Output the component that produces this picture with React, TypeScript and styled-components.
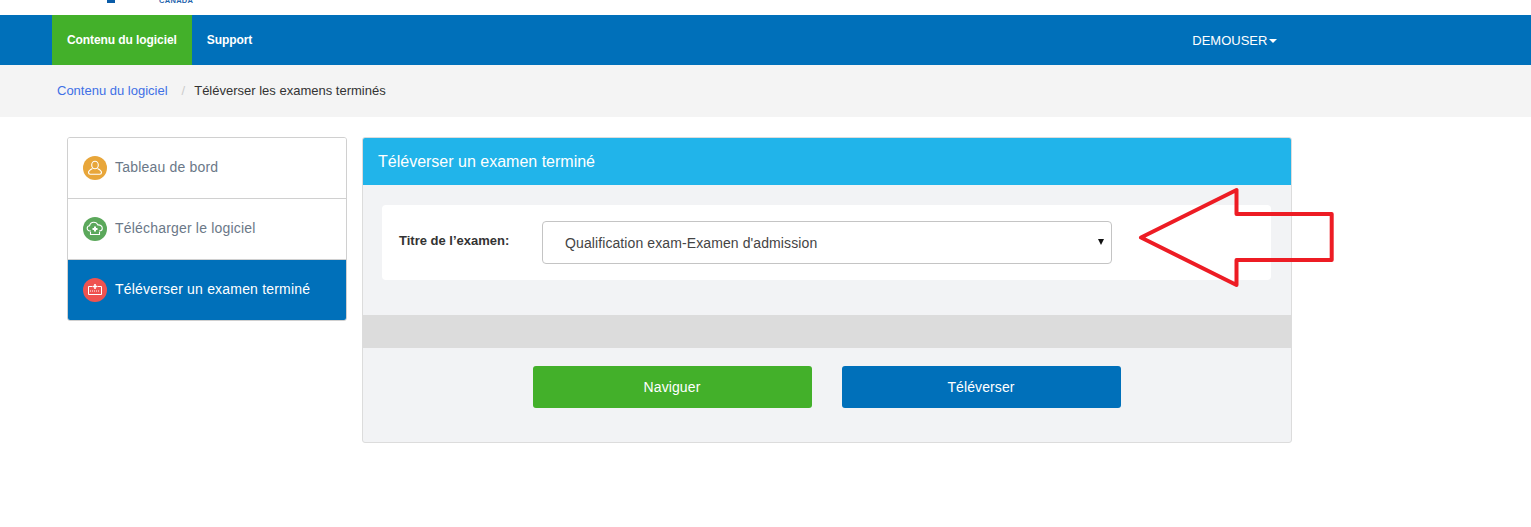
import styled, { createGlobalStyle } from "styled-components";

const GlobalStyle = createGlobalStyle`
  html, body {
    margin: 0;
    padding: 0;
    background: #fff;
    font-family: "Liberation Sans", Arial, sans-serif;
    color: #333;
  }
  * {
    box-sizing: border-box;
  }
`;

const Page = styled.div`
  position: relative;
  width: 1531px;
  height: 527px;
  overflow: hidden;
`;

const LogoStrip = styled.div`
  height: 15px;
  padding-left: 107px;
  display: flex;
  align-items: flex-start;
  overflow: hidden;
`;

const LogoMark = styled.div`
  width: 8px;
  height: 3px;
  background: #0a5ca8;
`;

const LogoText = styled.div`
  margin-left: 44px;
  margin-top: -4px;
  font-size: 7.5px;
  line-height: 9px;
  font-weight: 700;
  letter-spacing: 0.3px;
  color: #1f64ad;
`;

const NavBar = styled.nav`
  height: 50px;
  background: #0070ba;
  padding-left: 52px;
  display: flex;
  align-items: stretch;
`;

const NavTab = styled.a<{ $active?: boolean }>`
  display: flex;
  align-items: center;
  padding: 0 15px;
  font-size: 12px;
  font-weight: 700;
  letter-spacing: -0.08px;
  color: #fff;
  background: ${(p) => (p.$active ? "#43b02a" : "transparent")};
`;

const NavSpacer = styled.div`
  width: 925px;
`;

const UserMenu = styled.div`
  display: flex;
  align-items: center;
  gap: 2px;
  font-size: 13px;
  color: #fff;
`;

const Caret = styled.span`
  margin-top: 1px;
  border-left: 4px solid transparent;
  border-right: 4px solid transparent;
  border-top: 4px solid #fff;
`;

const Breadcrumb = styled.div`
  height: 52px;
  background: #f4f4f4;
  padding: 0 0 1px 57px;
  display: flex;
  align-items: center;
  font-size: 13px;
`;

const CrumbLink = styled.a`
  color: #3f70e6;
`;

const CrumbSep = styled.span`
  margin: 0 9px 0 14px;
  color: #ccc;
`;

const CrumbCurrent = styled.span`
  color: #333;
`;

const Content = styled.main`
  display: flex;
  align-items: flex-start;
  gap: 15px;
  padding: 20px 0 0 67px;
`;

const SideMenu = styled.aside`
  width: 280px;
  border: 1px solid #d0d0d0;
  border-radius: 3px;
  background: #fff;
  overflow: hidden;
`;

const SideItem = styled.a<{ $active?: boolean }>`
  height: 61px;
  display: flex;
  align-items: center;
  gap: 8px;
  padding-left: 15px;
  font-size: 14px;
  letter-spacing: 0.19px;
  color: ${(p) => (p.$active ? "#fff" : "#6b7888")};
  background: ${(p) => (p.$active ? "#0070ba" : "#fff")};
  border-bottom: 1px solid #d0d0d0;
  &:last-child {
    height: 60px;
    border-bottom: 0;
  }
`;

const ItemLabel = styled.span`
  padding-bottom: 2px;
`;

const IconDisc = styled.span<{ $color: string }>`
  width: 24px;
  height: 24px;
  flex: none;
  border-radius: 50%;
  background: ${(p) => p.$color};
  display: flex;
  align-items: center;
  justify-content: center;
`;

const Panel = styled.section`
  width: 930px;
  height: 306px;
  background: #f2f3f5;
  border: 1px solid #dcdcdc;
  border-radius: 3px;
  overflow: hidden;
`;

const PanelHead = styled.h2`
  margin: 0;
  height: 47px;
  padding-left: 15px;
  display: flex;
  align-items: center;
  background: #21b4ea;
  color: #fff;
  font-size: 16px;
  font-weight: 400;
`;

const PanelBody = styled.div`
  padding: 20px 20px 35px 19px;
`;

const FieldCard = styled.div`
  height: 75px;
  background: #fff;
  border-radius: 4px;
  display: flex;
  align-items: flex-start;
  padding: 16px 0 0 17px;
`;

const FieldLabel = styled.label`
  width: 143px;
  padding-top: 12px;
  font-size: 13px;
  font-weight: 700;
  color: #333;
`;

const SelectWrap = styled.div`
  position: relative;
  width: 570px;
  height: 43px;
  &::after {
    content: "";
    position: absolute;
    right: 8px;
    top: 18px;
    border-left: 3px solid transparent;
    border-right: 3px solid transparent;
    border-top: 6px solid #111;
    pointer-events: none;
  }
`;

const ExamSelect = styled.select`
  appearance: none;
  width: 100%;
  height: 100%;
  padding: 0 22px;
  background: #fff;
  border: 1px solid #c4c4c4;
  border-radius: 4px;
  font-family: inherit;
  font-size: 14px;
  letter-spacing: 0.1px;
  color: #444;
`;

const GreyStrip = styled.div`
  height: 33px;
  background: #dcdcdc;
`;

const ButtonRow = styled.div`
  display: flex;
  justify-content: center;
  gap: 30px;
  padding-top: 18px;
  padding-right: 1px;
`;

const ActionButton = styled.button<{ $color: string }>`
  width: 279px;
  height: 42px;
  border: 0;
  border-radius: 3px;
  background: ${(p) => p.$color};
  color: #fff;
  font-family: inherit;
  font-size: 14px;
  letter-spacing: 0.1px;
`;

const ArrowOverlay = styled.svg`
  position: absolute;
  left: 1130px;
  top: 180px;
  width: 215px;
  height: 115px;
`;

const UserIcon = () => (
  <svg width="16" height="16" viewBox="0 0 16 16" fill="none" stroke="#fff" strokeWidth="1.1">
    <ellipse cx="8" cy="5" rx="3.3" ry="3.8" />
    <path d="M5.5 8.5 C3.5 9.5 1.5 10.5 1.5 12.5 C1.5 13.7 2.3 14.2 3.3 14.2 H12.7 C13.7 14.2 14.5 13.7 14.5 12.5 C14.5 10.5 12.5 9.5 10.5 8.5" />
  </svg>
);

const CloudIcon = () => (
  <svg width="18" height="18" viewBox="0 0 18 18" fill="none" stroke="#fff" strokeWidth="1.1">
    <path d="M5 11 H4 C2.3 11 1.2 9.8 1.2 8.3 C1.2 6.9 2.3 5.8 3.6 5.7 C4 3.5 5.7 2.2 7.8 2.2 C9.7 2.2 11.2 3.3 11.8 4.9 C14.4 4.7 16.3 6.3 16.3 8.3 C16.3 9.9 15.1 11 13.5 11 H13" />
    <path d="M9 6.5 V11.5 M6.5 9 H11.5" strokeWidth="2" />
    <path d="M4.5 12 V14.5 H13.5 V12" />
  </svg>
);

const UploadIcon = () => (
  <svg width="18" height="18" viewBox="0 0 18 18" fill="none" stroke="#fff" strokeWidth="1">
    <path d="M6.5 5.5 H2.5 V13.5 H15.5 V5.5 H11.5" />
    <path d="M9 3 V8 M6.8 5.5 H11.2" strokeWidth="1.6" />
    <path d="M4 10 H14" strokeDasharray="1 1" />
  </svg>
);

export default function App() {
  return (
    <Page>
      <GlobalStyle />
      <LogoStrip>
        <LogoMark />
        <LogoText>CANADA</LogoText>
      </LogoStrip>
      <NavBar>
        <NavTab $active>Contenu du logiciel</NavTab>
        <NavTab>Support</NavTab>
        <NavSpacer />
        <UserMenu>
          DEMOUSER
          <Caret />
        </UserMenu>
      </NavBar>
      <Breadcrumb>
        <CrumbLink>Contenu du logiciel</CrumbLink>
        <CrumbSep>/</CrumbSep>
        <CrumbCurrent>Téléverser les examens terminés</CrumbCurrent>
      </Breadcrumb>
      <Content>
        <SideMenu>
          <SideItem>
            <IconDisc $color="#e8a63a">
              <UserIcon />
            </IconDisc>
            <ItemLabel>Tableau de bord</ItemLabel>
          </SideItem>
          <SideItem>
            <IconDisc $color="#5ba85b">
              <CloudIcon />
            </IconDisc>
            <ItemLabel>Télécharger le logiciel</ItemLabel>
          </SideItem>
          <SideItem $active>
            <IconDisc $color="#ef5350">
              <UploadIcon />
            </IconDisc>
            <ItemLabel>Téléverser un examen terminé</ItemLabel>
          </SideItem>
        </SideMenu>
        <Panel>
          <PanelHead>Téléverser un examen terminé</PanelHead>
          <PanelBody>
            <FieldCard>
              <FieldLabel>Titre de l’examen:</FieldLabel>
              <SelectWrap>
                <ExamSelect defaultValue="q">
                  <option value="q">Qualification exam-Examen d'admission</option>
                </ExamSelect>
              </SelectWrap>
            </FieldCard>
          </PanelBody>
          <GreyStrip />
          <ButtonRow>
            <ActionButton $color="#43b02a">Naviguer</ActionButton>
            <ActionButton $color="#0070ba">Téléverser</ActionButton>
          </ButtonRow>
        </Panel>
      </Content>
      <ArrowOverlay viewBox="0 0 215 115" fill="none">
        <path
          d="M11 57.5 L106.5 10 V34 H201.7 V80 H106.5 V105 Z"
          stroke="#ed1c24"
          strokeWidth="4"
          strokeLinejoin="round"
        />
      </ArrowOverlay>
    </Page>
  );
}
